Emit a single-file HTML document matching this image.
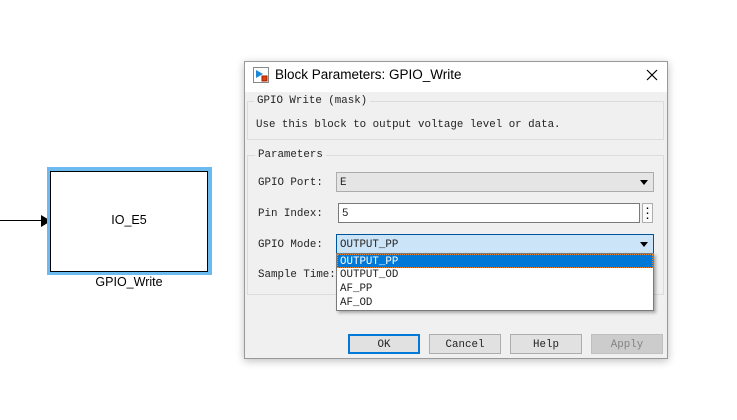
<!DOCTYPE html>
<html><head><style>
*{margin:0;padding:0;box-sizing:border-box}
body{width:737px;height:420px;background:#fff;position:relative;overflow:hidden;font-family:"Liberation Mono",monospace;font-size:11px;color:#000}
.a{position:absolute}
.m{font-family:"Liberation Mono",monospace;font-size:10.8px;color:#222}
.btn{position:absolute;top:334px;width:72px;height:20px;background:#e1e1e1;border:1px solid #adadad;text-align:center;line-height:20px}
</style></head><body>
<div class="a" style="left:0;top:220px;width:44px;height:1px;background:#000"></div>
<div class="a" style="left:41px;top:215px;width:0;height:0;border-left:10px solid #000;border-top:6px solid transparent;border-bottom:6px solid transparent"></div>
<div class="a" style="left:47px;top:167px;width:165px;height:108px;background:#6cbbf0"></div>
<div class="a" style="left:50px;top:171px;width:158px;height:101px;background:#fff;border:1.5px solid #000"></div>
<div class="a" style="left:50px;top:213px;width:158px;text-align:center;font-family:'Liberation Sans',sans-serif;font-size:12.5px">IO_E5</div>
<div class="a" style="left:50px;top:275px;width:158px;text-align:center;font-family:'Liberation Sans',sans-serif;font-size:12.5px">GPIO_Write</div>
<div class="a" style="left:244px;top:61px;width:424px;height:298px;background:#f0f0f0;border:1px solid #999;box-shadow:0 2px 8px rgba(0,0,0,.25)"></div>
<div class="a" style="left:245px;top:62px;width:422px;height:30px;background:#fff"></div>
<svg class="a" style="left:253px;top:67px" width="17" height="17"><rect x=".5" y=".5" width="15" height="15" fill="#fff" stroke="#888"/><path d="M3 3 L10 7 L3 11Z" fill="#1e88d8"/><rect x="9" y="9" width="5" height="5" fill="#e04010" stroke="#a02000"/></svg>
<div class="a" style="left:275px;top:67px;font-family:'Liberation Sans',sans-serif;font-size:13.5px">Block Parameters: GPIO_Write</div>
<svg class="a" style="left:646px;top:69px" width="12" height="12"><path d="M1 1L11 11M11 1L1 11" stroke="#000" stroke-width="1.2"/></svg>
<div class="a" style="left:247px;top:101px;width:417px;height:39px;border:1px solid #dcdcdc"></div>
<div class="a m" style="left:254px;top:95px;background:#f0f0f0;padding:0 3px">GPIO Write (mask)</div>
<div class="a m" style="left:256px;top:119px">Use this block to output voltage level or data.</div>
<div class="a" style="left:247px;top:155px;width:417px;height:140px;border:1px solid #dcdcdc"></div>
<div class="a m" style="left:255px;top:149px;background:#f0f0f0;padding:0 3px">Parameters</div>
<div class="a m" style="left:258px;top:177px">GPIO Port:</div>
<div class="a" style="left:336px;top:172px;width:318px;height:20px;background:#e5e5e5;border:1px solid #acacac"></div>
<div class="a m" style="left:340px;top:177px">E</div>
<div class="a" style="left:640px;top:180px;border-top:5px solid #000;border-left:4px solid transparent;border-right:4px solid transparent"></div>
<div class="a m" style="left:258px;top:208px">Pin Index:</div>
<div class="a" style="left:338px;top:203px;width:302px;height:20px;background:#fff;border:1px solid #7a7a7a"></div>
<div class="a m" style="left:342px;top:208px">5</div>
<div class="a" style="left:642px;top:203px;width:11px;height:20px;background:#fafafa;border:1px solid #adadad;text-align:center;font-weight:bold;line-height:5px;font-size:10px;padding-top:3px">·<br>·<br>·</div>
<div class="a m" style="left:258px;top:239px">GPIO Mode:</div>
<div class="a m" style="left:258px;top:269px">Sample Time:</div>
<div class="a" style="left:336px;top:234px;width:318px;height:20px;background:#cce4f7;border:1px solid #005499"></div>
<div class="a m" style="left:340px;top:239px">OUTPUT_PP</div>
<div class="a" style="left:640px;top:242px;border-top:5px solid #000;border-left:4px solid transparent;border-right:4px solid transparent"></div>
<div class="a" style="left:336px;top:253px;width:318px;height:58px;background:#fff;border:1px solid #7a7a7a;box-shadow:2px 2px 3px rgba(0,0,0,.3)"></div>
<div class="a" style="left:337px;top:254px;width:316px;height:14px;background:#0078d7;border:1px dotted #e8862b"></div>
<div class="a m" style="left:340px;top:255px;color:#fff;line-height:14px">OUTPUT_PP</div>
<div class="a m" style="left:340px;top:268px;line-height:14px">OUTPUT_OD<br>AF_PP<br>AF_OD</div>
<div class="btn m" style="left:348px;border:2px solid #0078d7;line-height:18px">OK</div>
<div class="btn m" style="left:429px">Cancel</div>
<div class="btn m" style="left:510px">Help</div>
<div class="btn m" style="left:591px;background:#ccc;border-color:#bfbfbf;color:#838383">Apply</div>
</body></html>
